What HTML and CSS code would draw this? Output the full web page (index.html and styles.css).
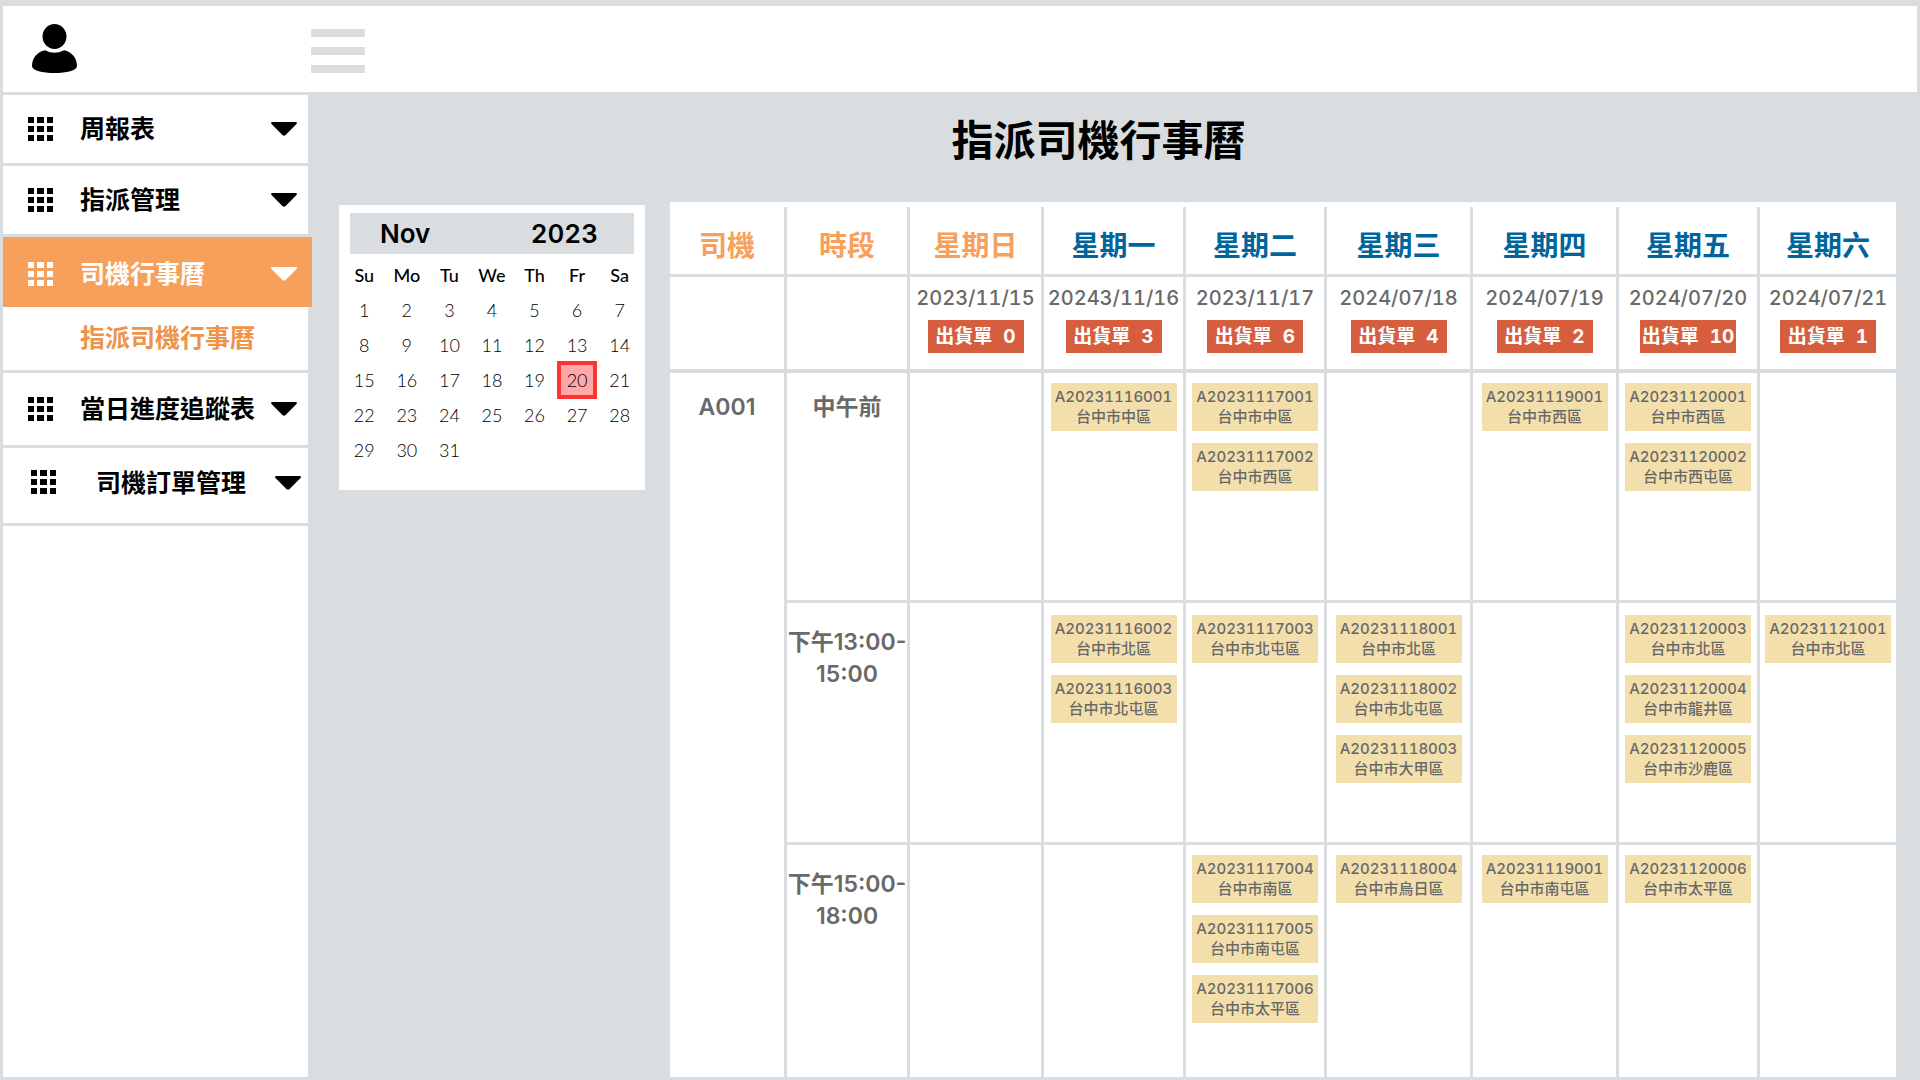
FILE: index.html
```html
<!DOCTYPE html>
<html lang="zh-Hant">
<head>
<meta charset="utf-8">
<meta name="viewport" content="width=device-width, initial-scale=1">
<title>指派司機行事曆</title>
<link rel="stylesheet" href="styles.css">
</head>
<body>
<svg class="sprite" width="0" height="0" aria-hidden="true">
  <symbol id="grid" viewBox="0 0 25 25">
    <path d="M0 0h6v6H0zM9 0h7v6H9zM19 0h6v6h-6zM0 9h6v6H0zM9 9h7v6H9zM19 9h6v6h-6zM0 18h6v6H0zM9 18h7v6H9zM19 18h6v6h-6z"/>
  </symbol>
  <symbol id="caret" viewBox="0 0 26 14">
    <path d="M1.2 0h23.6q1.8.4.7 1.9L14.6 13q-1.6 1.6-3.2 0L.5 1.9Q-.6.4 1.2 0z"/>
  </symbol>
</svg>

<header class="topbar">
  <button class="icon-button" type="button" aria-label="使用者">
    <svg width="45" height="50" viewBox="0 0 45 50" aria-hidden="true">
      <ellipse cx="22.500" cy="12.500" rx="12" ry="12.500"/>
      <path d="M13 26.300q9.500 5 19 0C40 27.800 45 34.500 45 42c0 4.500-10.500 7-22.500 7S0 46.500 0 42c0-7.500 5-14.200 13-15.700z"/>
    </svg>
  </button>
  <button class="icon-button menu-toggle" type="button" aria-label="選單">
    <span class="bar"></span><span class="bar"></span><span class="bar"></span>
  </button>
</header>

<div class="layout">
  <nav class="sidebar">
    <button class="item" type="button"><svg class="grid"><use href="#grid"/></svg><span>周報表</span><svg class="caret"><use href="#caret"/></svg></button>
    <button class="item" type="button"><svg class="grid"><use href="#grid"/></svg><span>指派管理</span><svg class="caret"><use href="#caret"/></svg></button>
    <div class="group">
      <button class="item active" type="button" aria-expanded="true"><svg class="grid"><use href="#grid"/></svg><span>司機行事曆</span><svg class="caret"><use href="#caret"/></svg></button>
      <a class="subitem" href="#">指派司機行事曆</a>
    </div>
    <button class="item" type="button"><svg class="grid"><use href="#grid"/></svg><span>當日進度追蹤表</span><svg class="caret"><use href="#caret"/></svg></button>
    <button class="item wide" type="button"><svg class="grid"><use href="#grid"/></svg><span>司機訂單管理</span><svg class="caret"><use href="#caret"/></svg></button>
    <div class="rest"></div>
  </nav>

  <main class="main">
    <h1 class="title">指派司機行事曆</h1>
    <div class="content">
      <section class="calendar">
        <div class="month"><span>Nov</span><span>2023</span></div>
        <table class="days">
          <thead><tr><th>Su</th><th>Mo</th><th>Tu</th><th>We</th><th>Th</th><th>Fr</th><th>Sa</th></tr></thead>
          <tbody>
            <tr><td>1</td><td>2</td><td>3</td><td>4</td><td>5</td><td>6</td><td>7</td></tr>
            <tr><td>8</td><td>9</td><td>10</td><td>11</td><td>12</td><td>13</td><td>14</td></tr>
            <tr><td>15</td><td>16</td><td>17</td><td>18</td><td>19</td><td><span class="selected">20</span></td><td>21</td></tr>
            <tr><td>22</td><td>23</td><td>24</td><td>25</td><td>26</td><td>27</td><td>28</td></tr>
            <tr><td>29</td><td>30</td><td>31</td><td></td><td></td><td></td><td></td></tr>
          </tbody>
        </table>
      </section>

      <section class="panel">
        <table class="schedule">
          <colgroup>
            <col class="c-driver"><col class="c-slot"><col class="c-sun"><col class="c-mon"><col class="c-tue"><col class="c-wed"><col class="c-thu"><col class="c-fri"><col class="c-sat">
          </colgroup>
          <thead>
            <tr class="names">
              <th class="accent">司機</th><th class="accent">時段</th><th class="accent">星期日</th><th>星期一</th><th>星期二</th><th>星期三</th><th>星期四</th><th>星期五</th><th>星期六</th>
            </tr>
            <tr class="dates">
              <td></td>
              <td></td>
              <td>2023/11/15<div class="badge"><span>出貨單</span><span>0</span></div></td>
              <td>20243/11/16<div class="badge"><span>出貨單</span><span>3</span></div></td>
              <td>2023/11/17<div class="badge"><span>出貨單</span><span>6</span></div></td>
              <td>2024/07/18<div class="badge"><span>出貨單</span><span>4</span></div></td>
              <td>2024/07/19<div class="badge"><span>出貨單</span><span>2</span></div></td>
              <td>2024/07/20<div class="badge"><span>出貨單</span><span>10</span></div></td>
              <td>2024/07/21<div class="badge"><span>出貨單</span><span>1</span></div></td>
            </tr>
          </thead>
          <tbody>
            <tr class="noon">
              <th class="label" rowspan="3">A001</th>
              <th class="label">中午前</th>
              <td></td>
              <td><div class="card">A20231116001<br>台中市中區</div></td>
              <td><div class="card">A20231117001<br>台中市中區</div><div class="card">A20231117002<br>台中市西區</div></td>
              <td></td>
              <td><div class="card">A20231119001<br>台中市西區</div></td>
              <td><div class="card">A20231120001<br>台中市西區</div><div class="card">A20231120002<br>台中市西屯區</div></td>
              <td></td>
            </tr>
            <tr class="early">
              <th class="label">下午13:00-<br>15:00</th>
              <td></td>
              <td><div class="card">A20231116002<br>台中市北區</div><div class="card">A20231116003<br>台中市北屯區</div></td>
              <td><div class="card">A20231117003<br>台中市北屯區</div></td>
              <td><div class="card">A20231118001<br>台中市北區</div><div class="card">A20231118002<br>台中市北屯區</div><div class="card">A20231118003<br>台中市大甲區</div></td>
              <td></td>
              <td><div class="card">A20231120003<br>台中市北區</div><div class="card">A20231120004<br>台中市龍井區</div><div class="card">A20231120005<br>台中市沙鹿區</div></td>
              <td><div class="card">A20231121001<br>台中市北區</div></td>
            </tr>
            <tr class="late">
              <th class="label">下午15:00-<br>18:00</th>
              <td></td>
              <td></td>
              <td><div class="card">A20231117004<br>台中市南區</div><div class="card">A20231117005<br>台中市南屯區</div><div class="card">A20231117006<br>台中市太平區</div></td>
              <td><div class="card">A20231118004<br>台中市烏日區</div></td>
              <td><div class="card">A20231119001<br>台中市南屯區</div></td>
              <td><div class="card">A20231120006<br>台中市太平區</div></td>
              <td></td>
            </tr>
          </tbody>
        </table>
      </section>
    </div>
  </main>
</div>
</body>
</html>
```

FILE: styles.css
```css
:root {
  --line: #d9dde0;
  --orange: #f7a05b;
  --blue: #00659c;
  --text: #696969;
}

* {
  box-sizing: border-box;
}

body {
  display: flex;
  flex-direction: column;
  gap: 3px;
  min-height: 100vh;
  margin: 0;
  padding: 6px 3px 3px;
  background: var(--line);
  color: #000;
  font-family: Inter, "Noto Sans CJK TC", sans-serif;
}

button {
  margin: 0;
  border: 0;
  color: inherit;
  font: inherit;
  cursor: pointer;
}

table {
  width: 100%;
  table-layout: fixed;
  border-collapse: separate;
  border-spacing: 0;
}

th,
td {
  padding: 0;
}

.sprite {
  position: absolute;
}

/* Top bar */
.topbar {
  display: flex;
  align-items: center;
  gap: 234px;
  height: 86px;
  padding: 0 29px;
  background: #fff;
}

.icon-button {
  padding: 0;
  background: none;
}

.icon-button svg {
  display: block;
}

.menu-toggle {
  display: grid;
  gap: 10px;
  width: 54px;
  padding-top: 3px;
}

.bar {
  height: 8px;
  background: var(--line);
}

.layout {
  display: grid;
  grid-template-columns: 309px 1fr;
  flex: 1;
}

/* Sidebar */
.sidebar {
  display: flex;
  flex-direction: column;
  gap: 3px;
}

.item {
  display: flex;
  align-items: center;
  height: 68px;
  margin-right: 4px;
  padding: 0 11px 0 25px;
  background: #fff;
  font-size: 25px;
  font-weight: 700;
  line-height: 36px;
  text-align: left;
  white-space: nowrap;
}

.item span {
  flex: 1;
  padding-left: 27px;
}

.item .grid {
  width: 25px;
  height: 25px;
}

.item .caret {
  width: 26px;
  height: 14px;
}

.item svg {
  flex: none;
  fill: currentColor;
}

.group {
  display: flex;
  flex-direction: column;
}

.item.active {
  height: 70px;
  margin-right: 0;
  padding: 4px 15px 0 25px;
  background: var(--orange);
  color: #fff;
}

.subitem {
  height: 63px;
  margin-right: 4px;
  padding-left: 77px;
  background: #fff;
  color: #ec944b;
  font-size: 25px;
  font-weight: 700;
  line-height: 63px;
  text-decoration: none;
}

.group + .item {
  height: 72px;
}

.item.wide {
  height: 75px;
  padding: 0 7px 6px 28px;
}

.item.wide span {
  padding-left: 40px;
}

.rest {
  flex: 1;
  margin-right: 4px;
  background: #fff;
}

/* Main area */
.main {
  display: flex;
  flex-direction: column;
  padding: 0 21px 0 27px;
}

.title {
  margin: 0;
  padding: 16px 38px 31px 0;
  font-size: 42px;
  font-weight: 700;
  line-height: 60px;
  text-align: center;
}

.content {
  display: grid;
  grid-template-columns: 306px 1fr;
  gap: 25px;
  flex: 1;
}

.calendar {
  align-self: start;
  margin-top: 3px;
  padding: 8px 4px 23px;
  background: #fff;
}

.month {
  display: flex;
  align-items: center;
  justify-content: space-between;
  height: 41px;
  margin: 0 7px 3px;
  padding: 0 36px 0 30px;
  background: var(--line);
  font-size: 26px;
  font-weight: 600;
  font-variant-numeric: tabular-nums;
}

.days {
  font-family: Lato, sans-serif;
  font-size: 18px;
  text-align: center;
}

.days th,
.days td {
  height: 35px;
  font-weight: 300;
}

.days th {
  font-weight: 500;
}

.selected {
  display: block;
  width: 40px;
  margin: -2px auto;
  border: 4px solid #ff3131;
  background: #ffa8a8;
  line-height: 30px;
}

/* Weekly schedule */
.panel {
  padding-top: 5px;
  background: #fff;
}

.c-driver { width: 117px; }
.c-slot { width: 123px; }
.c-sun { width: 134px; }
.c-mon { width: 142px; }
.c-tue { width: 141px; }
.c-wed { width: 146px; }
.c-thu { width: 146px; }
.c-fri { width: 141px; }
.c-sat { width: 136px; }

.schedule {
  color: var(--text);
  text-align: center;
}

.schedule th,
.schedule td {
  border-right: 3px solid var(--line);
  border-bottom: 3px solid var(--line);
  vertical-align: top;
  white-space: nowrap;
}

.schedule td {
  font-variant-numeric: tabular-nums;
}

.schedule th:last-child,
.schedule td:last-child {
  border-right: 0;
}

.schedule .late > *,
.schedule th[rowspan] {
  border-bottom: 0;
}

.schedule .names th {
  height: 70px;
  padding-top: 6px;
  color: var(--blue);
  font-size: 28px;
  font-weight: 700;
  vertical-align: middle;
}

.schedule .names .accent {
  color: var(--orange);
}

.schedule .dates td {
  height: 96px;
  padding-top: 9px;
  border-bottom-width: 4px;
  font-size: 20px;
  font-weight: 500;
  line-height: 24px;
}

.badge {
  display: flex;
  align-items: center;
  justify-content: center;
  gap: 11px;
  width: 96px;
  height: 33px;
  margin: 10px auto 0;
  background: #d65d3e;
  color: #fff;
  font-size: 19px;
  font-weight: 700;
}

.noon {
  height: 230px;
}

.early {
  height: 242px;
}

.late {
  height: 232px;
}

.schedule .label {
  padding-top: 23px;
  font-size: 23px;
  font-weight: 600;
  line-height: 32px;
}

.schedule .noon .label {
  padding-top: 18px;
}

.schedule tbody td {
  padding-top: 10px;
}

.schedule .early td {
  padding-top: 12px;
}

.card {
  width: 126px;
  height: 48px;
  margin: 0 auto 12px;
  padding-top: 4px;
  background: #f3dfac;
  font-size: 15px;
  font-weight: 500;
  line-height: 20px;
}
```
